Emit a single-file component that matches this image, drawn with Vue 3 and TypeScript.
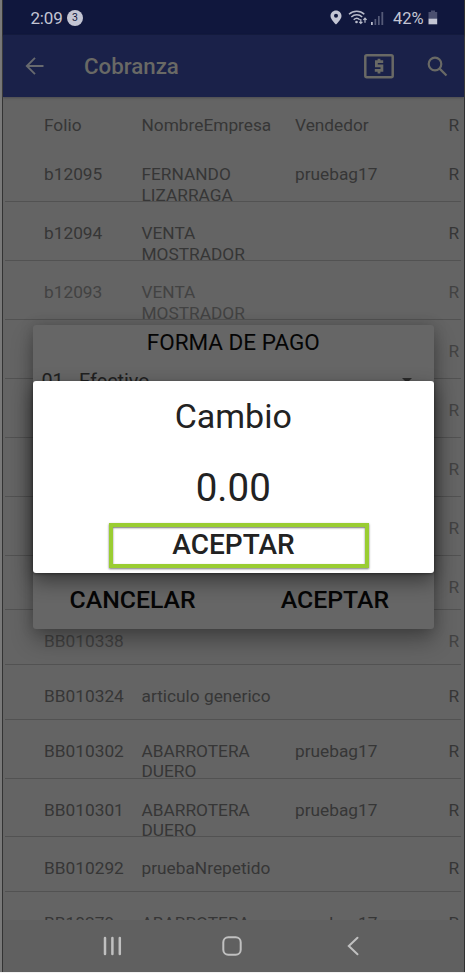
<script setup lang="ts">
interface Row {
  folio: string
  empresa: string[]
  vendedor: string
  height: number
  soft?: boolean
}

const rows: Row[] = [
  { folio: 'b12095', empresa: ['FERNANDO', 'LIZARRAGA'], vendedor: 'pruebag17', height: 59 },
  { folio: 'b12094', empresa: ['VENTA', 'MOSTRADOR'], vendedor: '', height: 59 },
  { folio: 'b12093', empresa: ['VENTA', 'MOSTRADOR'], vendedor: '', height: 59, soft: true },
  { folio: '', empresa: [], vendedor: '', height: 59, soft: true },
  { folio: '', empresa: [], vendedor: '', height: 59, soft: true },
  { folio: '', empresa: [], vendedor: '', height: 59, soft: true },
  { folio: '', empresa: [], vendedor: '', height: 59, soft: true },
  { folio: '', empresa: [], vendedor: '', height: 54, soft: true },
  { folio: 'BB010338', empresa: [], vendedor: '', height: 55, soft: true },
  { folio: 'BB010324', empresa: ['articulo generico'], vendedor: '', height: 54.5 },
  { folio: 'BB010302', empresa: ['ABARROTERA', 'DUERO'], vendedor: 'pruebag17', height: 59 },
  { folio: 'BB010301', empresa: ['ABARROTERA', 'DUERO'], vendedor: 'pruebag17', height: 58.5 },
  { folio: 'BB010292', empresa: ['pruebaNrepetido'], vendedor: '', height: 55 },
  { folio: 'BB10279', empresa: ['ABARROTERA', 'DUERO'], vendedor: 'pruebag17', height: 59 },
]
</script>

<template>
  <div class="frame">
    <div class="phone">
      <header class="status">
        <span class="clock">2:09</span>
        <span class="count">3</span>
        <span class="spacer"></span>
        <svg class="pin" width="12" height="15" viewBox="0 0 12 15">
          <path fill-rule="evenodd" fill="#c3c5d3" d="M6 .5C2.900.500.500 2.900.500 6c0 3.600 5.500 8.500 5.500 8.500S11.500 9.600 11.500 6C11.500 2.900 9.100.500 6 .500zM6 3.800a2 2 0 1 1 0 4 2 2 0 0 1 0-4z" />
        </svg>
        <svg class="wifi" width="20" height="16" viewBox="0 0 20 16" fill="none" stroke="#b9bccb" stroke-width="1.500">
          <path d="M1 4.300C5.500.200 12 .200 16.300 4.300M3.300 7C6.500 4.100 11 4.100 14.200 7M5.700 9.700c2-1.800 4.200-1.800 6 0" />
          <circle cx="8.500" cy="12" r="1.300" fill="#b9bccb" stroke="none" />
          <path stroke-width="1.200" d="M12.800 9v4.500M11.200 11.900l1.600 1.600 1.600-1.600M17 12.800V8.200M15.400 9.800L17 8.200l1.600 1.600" />
        </svg>
        <svg class="signal" width="13" height="14" viewBox="0 0 13 14">
          <path fill="#b9bccb" d="M0 11h1.800v3H0z" />
          <path fill="#555a78" d="M3.500 8h1.700v6H3.500zM7 5h1.700v9H7zM10.400 1h1.800v13h-1.800z" />
        </svg>
        <span class="percent">42%</span>
        <svg class="battery" width="10" height="15" viewBox="0 0 10 15">
          <path fill="#4b5070" d="M3 .5h4V2h2.200v7H.500V2H3z" />
          <path fill="#c3c5d3" d="M.500 8.700h8.700V14.300H.500z" />
        </svg>
      </header>

      <div class="appbar">
        <svg class="back" width="20" height="20" viewBox="0 0 20 20" fill="none" stroke="#67696e" stroke-width="1.900">
          <path d="M18.500 10H2.500M10 1.800L1.800 10l8.200 8.200" />
        </svg>
        <h1>Cobranza</h1>
        <span class="spacer"></span>
        <svg class="money" width="30" height="25" viewBox="0 0 30 25">
          <rect x="1.300" y="1.300" width="27.400" height="21.900" rx="1.500" fill="none" stroke="#696965" stroke-width="2.500" />
          <path fill="none" stroke="#696965" stroke-width="2.800" d="M19.200 7.700h-6.800v4.200H17.900v4.500h-7.100M15 4.800v3M15 16v3.400" />
        </svg>
        <svg class="search" width="21" height="21" viewBox="0 0 21 21" fill="none" stroke="#696965" stroke-width="2.200">
          <circle cx="8" cy="8" r="6.300" />
          <path d="M12.600 12.600l6.900 6.900" />
        </svg>
      </div>

      <main class="list">
        <div class="heading">
          <span>Folio</span><span>NombreEmpresa</span><span>Vendedor</span><span>R</span>
        </div>
        <div v-for="(row, i) in rows" :key="i" class="row" :class="{ soft: row.soft }" :style="{ height: row.height + 'px' }">
          <span>{{ row.folio }}</span>
          <span><span v-for="line in row.empresa" :key="line" class="line">{{ line }}</span></span>
          <span>{{ row.vendedor }}</span>
          <span>R</span>
        </div>
      </main>

      <nav class="nav">
        <svg width="20" height="20" viewBox="0 0 20 20" stroke="#c0c0c0" stroke-width="2.500" stroke-linecap="round">
          <path d="M3 2v16M10.400 2v16M17.800 2v16" />
        </svg>
        <svg width="20" height="20" viewBox="0 0 20 20" fill="none" stroke="#c0c0c0" stroke-width="2">
          <rect x="1.300" y="1.300" width="17.400" height="17.400" rx="5" />
        </svg>
        <svg width="20" height="20" viewBox="0 0 20 20" fill="none" stroke="#c0c0c0" stroke-width="2" stroke-linecap="round">
          <path d="M14.500 1.800L5.800 10l8.700 8.200" />
        </svg>
      </nav>
    </div>

    <section class="payment">
      <h2>FORMA DE PAGO</h2>
      <div class="select">
        <span>01 - Efectivo</span>
        <i class="caret"></i>
      </div>
      <div class="actions">
        <button class="cancel">CANCELAR</button>
        <button class="confirm">ACEPTAR</button>
      </div>
    </section>

    <section class="change">
      <h2>Cambio</h2>
      <p>0.00</p>
      <button><span>ACEPTAR</span></button>
    </section>
  </div>
</template>

<style>
body {
  margin: 0;
  background: #f2f2f2;
}
</style>

<style scoped>
* {
  box-sizing: border-box;
}
.frame {
  position: relative;
  width: 465px;
  height: 973px;
  padding-bottom: 1px;
  overflow: hidden;
  font-family: Roboto, sans-serif;
}
.phone {
  display: flex;
  flex-direction: column;
  height: 972px;
  border-left: 2px solid #797979;
  border-right: 1px solid #303030;
  background: #646464;
  box-shadow: inset 1px 0 #333;
}
.spacer {
  flex: 1;
}
.status {
  display: flex;
  align-items: center;
  flex: none;
  height: 35px;
  margin-left: 1px;
  padding: 0 26px 0 27.500px;
  background: #10173d;
  color: #c3c5d3;
  font-size: 17px;
}
.clock {
  width: 36.500px;
  letter-spacing: -0.2px;
}
.count {
  width: 16px;
  height: 16px;
  border-radius: 50%;
  background: #c3c5d3;
  color: #10173d;
  font-size: 10.5px;
  line-height: 16px;
  text-align: center;
}
.wifi {
  margin-left: 6px;
}
.signal {
  margin-left: 3px;
}
.percent {
  width: 35px;
  margin-left: 9px;
  padding-top: 1px;
  font-size: 16.5px;
}
.appbar {
  display: flex;
  align-items: center;
  flex: none;
  height: 62px;
  margin-left: 1px;
  padding: 0 16.500px 0 22px;
  background: #1a2149;
  box-shadow: 0 1px 2px #4b4b50;
}
.appbar h1 {
  margin: 0 0 0 39px;
  color: #696965;
  font-size: 22.3px;
  font-weight: 500;
  line-height: 30px;
}
.search {
  margin-left: 32.500px;
}
.list {
  flex: 1;
  min-height: 0;
  margin: 0 3px 0 3px;
  overflow: hidden;
  color: #363636;
  font-size: 17.3px;
  line-height: 20.5px;
}
.heading,
.row {
  display: grid;
  grid-template-columns: 97.500px 153.500px 153.500px 1fr;
  padding-left: 39px;
  white-space: nowrap;
}
.heading {
  height: 46px;
  padding-top: 17.500px;
}
.row {
  padding-top: 21px;
  border-bottom: 1px solid #525252;
}
.row.soft {
  color: #424242;
}
.line {
  display: block;
}
.nav {
  display: flex;
  flex: none;
  justify-content: space-between;
  height: 52px;
  margin-left: 1px;
  padding: 16px 101.500px 0 99px;
  background: #606060;
}
.payment {
  position: absolute;
  top: 325px;
  left: 32.500px;
  display: flex;
  flex-direction: column;
  width: 401.500px;
  height: 304px;
  border-radius: 3px;
  background: #666;
  box-shadow: 0 12px 22px rgba(0, 0, 0, 0.3), 0 0 14px rgba(0, 0, 0, 0.18);
  color: #050505;
}
.payment h2 {
  margin: 3px 0 0;
  font-size: 22.5px;
  font-weight: 400;
  line-height: 28px;
  text-align: center;
}
.select {
  display: flex;
  justify-content: space-between;
  margin-top: 13px;
  padding: 0 22px 0 9px;
  color: #202020;
  font-size: 19.800px;
  line-height: 26px;
}
.caret {
  height: 6px;
  margin-top: 9px;
  border: 5.500px solid transparent;
  border-top-color: #292929;
  border-bottom: 0;
}
.actions {
  display: flex;
  margin-top: auto;
  padding: 0 45px 13px 37px;
  justify-content: space-between;
}
button {
  padding: 0;
  border: 0;
  background: none;
  color: inherit;
  font-family: inherit;
  font-weight: 500;
}
.actions button {
  font-size: 24.800px;
  line-height: 32px;
}
.change {
  position: absolute;
  top: 380.500px;
  left: 32.500px;
  display: flex;
  flex-direction: column;
  align-items: center;
  width: 401.500px;
  height: 192.500px;
  padding-top: 14.500px;
  border-radius: 3px;
  background: #fff;
  box-shadow: 0 8px 20px rgba(0, 0, 0, 0.45), 0 1px 3px rgba(0, 0, 0, 0.4);
  color: #222;
}
.change h2 {
  margin: 0;
  font-size: 34px;
  font-weight: 400;
  line-height: 42px;
}
.change p {
  margin: 29px 0 0;
  font-size: 38.500px;
  line-height: 44px;
}
.change button {
  width: 260px;
  height: 45px;
  margin: 13px 0 0 11.500px;
  border: 4px solid #9acd32;
  box-shadow: 0 1px 2px #777, inset 0 1px 2px #777;
  font-size: 28px;
  line-height: 32px;
}
.change button span {
  display: block;
  margin: -1px 11px 0 0;
}
</style>
